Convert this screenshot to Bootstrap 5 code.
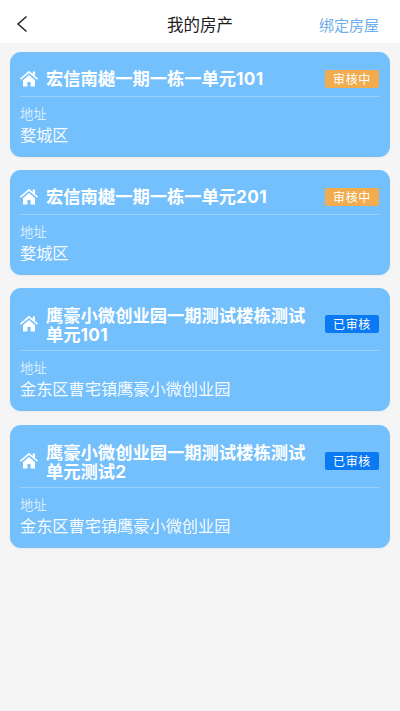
<!DOCTYPE html>
<html lang="zh-CN">
<head>
<meta charset="utf-8">
<title>我的房产</title>
<link href="https://cdn.jsdelivr.net/npm/bootstrap@5.3.0/dist/css/bootstrap.min.css" rel="stylesheet">
<style>
body{font-family:"Noto Sans CJK SC","Liberation Sans",sans-serif;background:#f5f5f5;width:400px;height:711px;overflow:hidden}
.topbar{height:43px;background:#fff;padding:5px 21px 0}
.topbar-side{width:80px}
.topbar-title{font-size:16.5px;color:#1c1c1c;line-height:1;text-align:center}
.topbar-link{font-size:15px;color:#6eade8;line-height:1;text-align:right}
.back-icon{width:12px;height:18px;display:block;margin-left:-5px}
.house-list{padding:9px 10px 0;gap:13px}
.house-card{background:#74c0fc;border-radius:11px;color:#fff;padding:0 11px 0 10px;box-shadow:0 1px 2px rgba(0,0,0,.06)}
.house-card:last-child{margin-top:1px}
.house-head{padding-top:17px;padding-bottom:8px;border-bottom:1px solid rgba(255,255,255,.28);gap:8px}
.house-head.tall{padding-top:17px;padding-bottom:6px}
.house-icon{width:18px;height:17px;flex:none}
.house-name{font-weight:700;font-size:17.3px;line-height:18px;flex:1;min-width:0}
.tall .house-name{line-height:19px}
.house-name .num{font-family:Inter,"Liberation Sans",sans-serif;font-weight:700;letter-spacing:.3px}
.status-tag{width:54px;height:18px;border-radius:2px;font-size:12px;line-height:18px;text-align:center;letter-spacing:.6px;flex:none}
.tag-wait{background:#f0ac4f}
.tag-ok{background:#0a79f2}
.tall .status-tag,.tall .house-icon{margin-top:-2px}
.house-body{padding:9px 0 12px}
.addr-label{font-size:13.3px;line-height:16px;color:rgba(255,255,255,.72)}
.addr-value{font-size:16.2px;line-height:21px;margin-top:2px;color:rgba(255,255,255,.95)}
</style>
</head>
<body>
<header class="topbar d-flex align-items-center justify-content-between">
  <div class="topbar-side">
    <svg class="back-icon" viewBox="0 0 12 18" fill="none" stroke="#222" stroke-width="1.5" aria-label="返回"><path d="M10.5 1.5 2 9l8.5 7.5"/></svg>
  </div>
  <div class="topbar-title flex-grow-1">我的房产</div>
  <div class="topbar-side topbar-link">绑定房屋</div>
</header>
<main class="house-list d-flex flex-column">
  <section class="house-card">
    <div class="house-head d-flex align-items-center">
      <svg class="house-icon" viewBox="0 0 18 17" fill="#fff"><path d="M9 .8 0 8.6l1 1.2L9 3l8 6.8 1-1.2-3-2.6V1.5h-2.3v2.5zM3 10.2V16.5h4.4v-4.6h3.2v4.6H15v-6.3L9 5z"/></svg>
      <div class="house-name">宏信南樾一期一栋一单元<span class="num">101</span></div>
      <div class="status-tag tag-wait">审核中</div>
    </div>
    <div class="house-body">
      <div class="addr-label">地址</div>
      <div class="addr-value">婺城区</div>
    </div>
  </section>
  <section class="house-card">
    <div class="house-head d-flex align-items-center">
      <svg class="house-icon" viewBox="0 0 18 17" fill="#fff"><path d="M9 .8 0 8.6l1 1.2L9 3l8 6.8 1-1.2-3-2.6V1.5h-2.3v2.5zM3 10.2V16.5h4.4v-4.6h3.2v4.6H15v-6.3L9 5z"/></svg>
      <div class="house-name">宏信南樾一期一栋一单元<span class="num">201</span></div>
      <div class="status-tag tag-wait">审核中</div>
    </div>
    <div class="house-body">
      <div class="addr-label">地址</div>
      <div class="addr-value">婺城区</div>
    </div>
  </section>
  <section class="house-card">
    <div class="house-head tall d-flex align-items-center">
      <svg class="house-icon" viewBox="0 0 18 17" fill="#fff"><path d="M9 .8 0 8.6l1 1.2L9 3l8 6.8 1-1.2-3-2.6V1.5h-2.3v2.5zM3 10.2V16.5h4.4v-4.6h3.2v4.6H15v-6.3L9 5z"/></svg>
      <div class="house-name">鹰豪小微创业园一期测试楼栋测试单元<span class="num">101</span></div>
      <div class="status-tag tag-ok">已审核</div>
    </div>
    <div class="house-body">
      <div class="addr-label">地址</div>
      <div class="addr-value">金东区曹宅镇鹰豪小微创业园</div>
    </div>
  </section>
  <section class="house-card">
    <div class="house-head tall d-flex align-items-center">
      <svg class="house-icon" viewBox="0 0 18 17" fill="#fff"><path d="M9 .8 0 8.6l1 1.2L9 3l8 6.8 1-1.2-3-2.6V1.5h-2.3v2.5zM3 10.2V16.5h4.4v-4.6h3.2v4.6H15v-6.3L9 5z"/></svg>
      <div class="house-name">鹰豪小微创业园一期测试楼栋测试单元测试<span class="num">2</span></div>
      <div class="status-tag tag-ok">已审核</div>
    </div>
    <div class="house-body">
      <div class="addr-label">地址</div>
      <div class="addr-value">金东区曹宅镇鹰豪小微创业园</div>
    </div>
  </section>
</main>
<script src="https://cdn.jsdelivr.net/npm/bootstrap@5.3.0/dist/js/bootstrap.bundle.min.js"></script>
</body>
</html>
